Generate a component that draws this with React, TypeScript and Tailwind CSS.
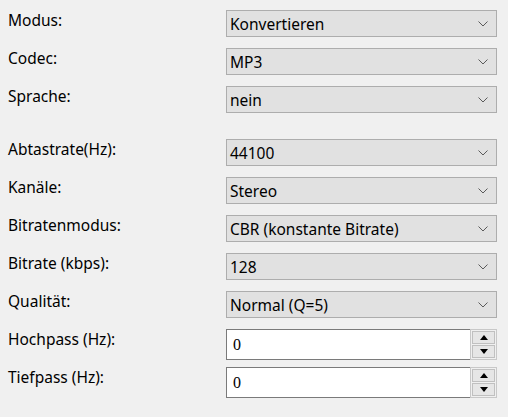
type Row =
  | { label: string; kind: 'select'; value: string }
  | { label: string; kind: 'spin'; value: string };

const groupA: Row[] = [
  { label: 'Modus:', kind: 'select', value: 'Konvertieren' },
  { label: 'Codec:', kind: 'select', value: 'MP3' },
  { label: 'Sprache:', kind: 'select', value: 'nein' },
];

const groupB: Row[] = [
  { label: 'Abtastrate(Hz):', kind: 'select', value: '44100' },
  { label: 'Kanäle:', kind: 'select', value: 'Stereo' },
  { label: 'Bitratenmodus:', kind: 'select', value: 'CBR (konstante Bitrate)' },
  { label: 'Bitrate (kbps):', kind: 'select', value: '128' },
  { label: 'Qualität:', kind: 'select', value: 'Normal (Q=5)' },
  { label: 'Hochpass (Hz):', kind: 'spin', value: '0' },
  { label: 'Tiefpass (Hz):', kind: 'spin', value: '0' },
];

function Select({ value }: { value: string }) {
  return (
    <div className="h-[27px] w-[271px] flex items-center justify-between border border-[#adadad] bg-[#e1e1e1] pl-[3px] pr-[8px] text-[15.5px] leading-5 text-black">
      <span>{value}</span>
      <svg width="10" height="6" viewBox="0 0 10 6" fill="none">
        <path d="M0.5 0.5 L5 5 L9.5 0.5" stroke="#5a5a5a" strokeWidth="1" />
      </svg>
    </div>
  );
}

function Spin({ value }: { value: string }) {
  return (
    <div className="h-[31px] w-[271px] flex">
      <div className="flex-1 border border-[#7a7a7a] border-r-0 bg-white flex items-center pl-[6px] font-['Liberation_Serif',serif] text-[16px] text-black">
        {value}
      </div>
      <div className="w-[27px] border border-[#c8c8c8] bg-[#f0f0f0] flex flex-col p-px gap-px">
        <div className="flex-1 flex items-center justify-center bg-[#e6e6e6] border border-[#c0c0c0]">
          <div className="w-0 h-0 border-l-[4px] border-r-[4px] border-b-[5px] border-l-transparent border-r-transparent border-b-black" />
        </div>
        <div className="flex-1 flex items-center justify-center bg-[#e6e6e6] border border-[#c0c0c0]">
          <div className="w-0 h-0 border-l-[4px] border-r-[4px] border-t-[5px] border-l-transparent border-r-transparent border-t-black" />
        </div>
      </div>
    </div>
  );
}

function FormRow({ row }: { row: Row }) {
  return (
    <div className="flex items-start h-[38px]">
      <div className="w-[218px] text-[15.5px] leading-5 text-black">{row.label}</div>
      {row.kind === 'select' ? <Select value={row.value} /> : <Spin value={row.value} />}
    </div>
  );
}

export default function App() {
  return (
    <div className="w-[508px] h-[417px] bg-[#f0f0f0] pl-2 pt-[10px] font-['Segoe_UI','Noto_Sans',sans-serif] overflow-hidden">
      <div className="flex flex-col">
        {groupA.map(r => (
          <FormRow key={r.label} row={r} />
        ))}
      </div>
      <div className="flex flex-col mt-[15px]">
        {groupB.map(r => (
          <FormRow key={r.label} row={r} />
        ))}
      </div>
    </div>
  );
}
